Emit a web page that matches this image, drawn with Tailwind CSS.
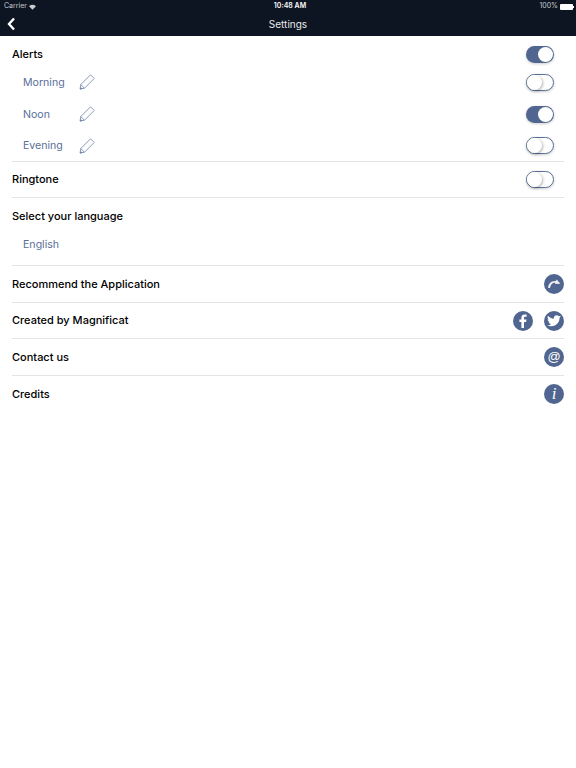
<!DOCTYPE html>
<html lang="en">
<head>
    <meta charset="UTF-8">
    <meta name="viewport" content="width=device-width, initial-scale=1.0">
    <title>Settings</title>
    <script src="https://cdn.jsdelivr.net/npm/@tailwindcss/browser@4"></script>
</head>
<body class="bg-white font-['Inter',sans-serif] w-[576px] h-[768px] overflow-hidden">
    <!-- top bar -->
    <header class="bg-[#0e1522] h-[36px] text-white">
        <div class="h-[13px] grid grid-cols-3 items-center pl-[4px] pr-[2px] text-[7px] text-[#c9cbcf]">
            <div class="flex items-center gap-[2px]">
                <span>Carrier</span>
                <svg width="7" height="6" viewBox="0 0 8 6"><path d="M4 6 L0 2 Q4 -1 8 2 Z" fill="#c9cbcf"/></svg>
            </div>
            <span class="font-semibold text-center pl-[2px] text-white">10:48 AM</span>
            <div class="flex items-center justify-end gap-[2px]">
                <span>100%</span>
                <div class="w-[13px] h-[6px] bg-white rounded-[1px]"></div>
                <div class="w-[1px] h-[2px] bg-white -ml-[2px]"></div>
            </div>
        </div>
        <div class="relative h-[23px] flex items-center justify-center text-[10px] text-[#e8e9eb]">
            <svg class="absolute left-[7px] top-[4px]" width="9" height="14" viewBox="0 0 9 14"><path d="M7 1.5 L2 7 L7 12.5" fill="none" stroke="white" stroke-width="2.4"/></svg>
            Settings
        </div>
    </header>

    <main class="px-[12px] text-[11px] font-medium text-black">
        <!-- alerts -->
        <section class="h-[126px] pt-[6px] border-b border-[#e4e4e2]">
            <div class="h-[24px] flex items-center justify-between">
                <span>Alerts</span>
                <div class="w-[28px] h-[17px] mr-[10px] rounded-full bg-[#506690] flex justify-end items-center pr-[1px] shadow-[0_1px_3px_rgba(0,0,0,0.2)]"><div class="w-[15px] h-[15px] rounded-full bg-white"></div></div>
            </div>
            <div class="h-[32px] flex items-center justify-between pl-[11px]">
                <div class="flex items-center font-normal text-[10.6px] text-[#5a6f99]">
                    <span class="w-[56px] pt-[2px]">Morning</span>
                    <svg width="16" height="16" viewBox="0 0 16 16" fill="none" stroke="#5a6f99" stroke-width="0.7"><path d="M1 15 L1.8 10.5 L11.5 0.8 L15.2 4.5 L5.5 14.2 Z M1.8 10.5 L5.5 14.2 M1 15 L3 14.7 L1.3 13"/></svg>
                </div>
                <div class="w-[28px] h-[17px] mr-[10px] rounded-full bg-white border border-[#5a6f99] flex items-center shadow-[0_1px_3px_rgba(0,0,0,0.2)]"><div class="w-[15px] h-[15px] rounded-full bg-white shadow-[1px_1px_3px_rgba(0,0,0,0.3)]"></div></div>
            </div>
            <div class="h-[32px] flex items-center justify-between pl-[11px]">
                <div class="flex items-center font-normal text-[10.6px] text-[#5a6f99]">
                    <span class="w-[56px] pt-[2px]">Noon</span>
                    <svg width="16" height="16" viewBox="0 0 16 16" fill="none" stroke="#5a6f99" stroke-width="0.7"><path d="M1 15 L1.8 10.5 L11.5 0.8 L15.2 4.5 L5.5 14.2 Z M1.8 10.5 L5.5 14.2 M1 15 L3 14.7 L1.3 13"/></svg>
                </div>
                <div class="w-[28px] h-[17px] mr-[10px] rounded-full bg-[#506690] flex justify-end items-center pr-[1px] shadow-[0_1px_3px_rgba(0,0,0,0.2)]"><div class="w-[15px] h-[15px] rounded-full bg-white"></div></div>
            </div>
            <div class="h-[31px] flex items-center justify-between pl-[11px]">
                <div class="flex items-center font-normal text-[10.6px] text-[#5a6f99]">
                    <span class="w-[56px]">Evening</span>
                    <svg width="16" height="16" viewBox="0 0 16 16" fill="none" stroke="#5a6f99" stroke-width="0.7"><path d="M1 15 L1.8 10.5 L11.5 0.8 L15.2 4.5 L5.5 14.2 Z M1.8 10.5 L5.5 14.2 M1 15 L3 14.7 L1.3 13"/></svg>
                </div>
                <div class="w-[28px] h-[17px] mr-[10px] rounded-full bg-white border border-[#5a6f99] flex items-center shadow-[0_1px_3px_rgba(0,0,0,0.2)]"><div class="w-[15px] h-[15px] rounded-full bg-white shadow-[1px_1px_3px_rgba(0,0,0,0.3)]"></div></div>
            </div>
        </section>

        <section class="h-[36px] border-b border-[#e4e4e2] flex items-center justify-between">
            <span>Ringtone</span>
            <div class="w-[28px] h-[17px] mr-[10px] rounded-full bg-white border border-[#5a6f99] flex items-center shadow-[0_1px_3px_rgba(0,0,0,0.2)]"><div class="w-[15px] h-[15px] rounded-full bg-white shadow-[1px_1px_3px_rgba(0,0,0,0.3)]"></div></div>
        </section>

        <section class="h-[68px] border-b border-[#e4e4e2]">
            <div class="h-[36px] flex items-center">Select your language</div>
            <div class="h-[22px] flex items-center pl-[11px] font-normal text-[10.6px] text-[#5a6f99]">English</div>
        </section>

        <section class="h-[37px] border-b border-[#e4e4e2] flex items-center justify-between">
            <span>Recommend the Application</span>
            <div class="w-[20px] h-[20px] rounded-full bg-[#506690] flex items-center justify-center">
                <svg width="14" height="12" viewBox="0 0 14 12"><path d="M1.2 10 C1.2 5.4 4.4 2.6 9 3 L9.6 1.4 L13.4 5.8 L8 6 L8.6 4.9 C6 4.4 3.6 6.2 3 10 Z" fill="#eef0f4"/></svg>
            </div>
        </section>

        <section class="h-[36px] border-b border-[#e4e4e2] flex items-center justify-between">
            <span>Created by Magnificat</span>
            <div class="flex items-center gap-[11px]">
                <div class="w-[20px] h-[20px] rounded-full bg-[#506690] flex items-center justify-center">
                    <svg width="8" height="14" viewBox="0 0 8 14"><path d="M2.4 14 V8 H0.4 V5.6 H2.4 V3.8 C2.4 1.6 3.6 0.4 5.6 0.4 H7.6 V2.8 H6.2 C5.4 2.8 5 3.2 5 4 V5.6 H7.5 L7.1 8 H5 V14 Z" fill="white"/></svg>
                </div>
                <div class="w-[20px] h-[20px] rounded-full bg-[#506690] flex items-center justify-center">
                    <svg width="14" height="12" viewBox="0 0 24 20"><path d="M24 2.4c-.9.4-1.8.7-2.8.8 1-.6 1.8-1.6 2.2-2.7-1 .6-2 1-3.1 1.2C19.3.7 18 0 16.6 0c-2.7 0-4.9 2.2-4.9 4.9 0 .4 0 .8.1 1.1C7.7 5.8 4.1 3.9 1.7.9c-.4.7-.7 1.6-.7 2.5 0 1.7.9 3.2 2.2 4.1-.8 0-1.6-.2-2.2-.6v.1c0 2.4 1.7 4.4 3.9 4.8-.4.1-.8.2-1.3.2-.3 0-.6 0-.9-.1.6 2 2.4 3.4 4.6 3.4-1.7 1.3-3.8 2.1-6.1 2.1-.4 0-.8 0-1.2-.1C2.2 18.3 4.8 19 7.5 19c9.1 0 14-7.5 14-14v-.6c1-.7 1.8-1.6 2.5-2z" fill="white"/></svg>
                </div>
            </div>
        </section>

        <section class="h-[37px] border-b border-[#e4e4e2] flex items-center justify-between">
            <span>Contact us</span>
            <div class="w-[20px] h-[20px] rounded-full bg-[#506690] flex items-center justify-center text-white text-[13px] font-normal font-['Liberation_Sans',sans-serif]">@</div>
        </section>

        <section class="h-[36px] flex items-center justify-between">
            <span>Credits</span>
            <div class="w-[20px] h-[20px] rounded-full bg-[#506690] flex items-center justify-center text-white text-[17px] italic font-normal font-['Liberation_Serif',serif]">i</div>
        </section>
    </main>
</body>
</html>
